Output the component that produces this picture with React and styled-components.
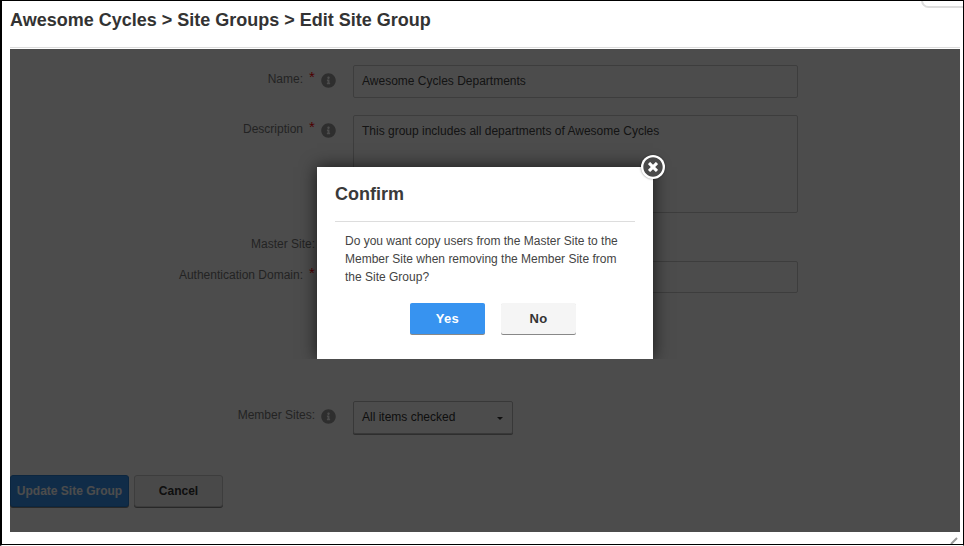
import React from "react";
import styled, { createGlobalStyle } from "styled-components";
import { FaInfoCircle, FaTimesCircle } from "react-icons/fa";

const Global = createGlobalStyle`
  html, body { margin: 0; padding: 0; background: #fff; }
  body { font-family: "Liberation Sans", Arial, sans-serif; }
`;

const Frame = styled.div`
  position: relative;
  width: 964px;
  height: 546px;
  box-sizing: border-box;
  border-top: 1px solid #000;
  border-left: 2px solid #000;
  border-right: 1px solid #000;
  border-bottom: 1px solid #fff;
  overflow: hidden;
  background: #fff;
`;

const BottomRule = styled.div`
  position: absolute;
  left: 0;
  right: 0;
  bottom: 0;
  height: 1px;
  background: #000;
`;

const CornerTab = styled.div`
  position: absolute;
  top: -8px;
  right: -14px;
  width: 52px;
  height: 11px;
  border: 2px solid #ddd;
  border-radius: 9px;
  background: #fff;

  &::after {
    content: "";
    position: absolute;
    left: 5px;
    right: 0;
    bottom: 7px;
    height: 2px;
    background: #666;
  }
`;

const Grip = styled.svg`
  position: absolute;
  right: 5px;
  bottom: 1px;
  width: 8px;
  height: 7px;
`;

const Page = styled.div`
  display: flex;
  flex-direction: column;
  margin: 0 3px 0 8px;
`;

const Title = styled.h1`
  margin: 0;
  height: 47px;
  box-sizing: border-box;
  padding-top: 9px;
  border-bottom: 1px solid #ddd;
  font-size: 18px;
  line-height: 20px;
  font-weight: 700;
  color: #333;
`;

const Content = styled.div`
  position: relative;
  margin-top: 1px;
  height: 483px;
  box-sizing: border-box;
  padding-top: 16px;
`;

const Overlay = styled.div`
  position: absolute;
  inset: 0;
  background: rgba(0, 0, 0, 0.7);
`;

const Row = styled.div`
  display: grid;
  grid-template-columns: 305px 38px 445px;
  height: ${(p) => p.$h}px;
  margin-bottom: ${(p) => p.$mb}px;
`;

const LabelCell = styled.div`
  display: flex;
  justify-content: flex-end;
  align-items: flex-start;
  padding-top: ${(p) => p.$pt ?? 7}px;
  font-size: 12px;
  line-height: 15px;
  color: #777;
`;

const Star = styled.span`
  width: 6px;
  margin-left: 6px;
  font-size: 15px;
  line-height: 10px;
  color: #f00;
`;

const IconCell = styled.div`
  display: flex;
  align-items: flex-start;
  padding: 8px 0 0 6px;
  color: #999;
  font-size: 15px;
`;

const Field = styled.div`
  box-sizing: border-box;
  border: 1px solid #ccc;
  border-radius: 2px;
  background: #fff;
  padding: 8px;
  font-size: 12px;
  line-height: 15px;
  color: #444;
`;

const SelectBox = styled.div`
  box-sizing: border-box;
  position: relative;
  width: 160px;
  height: 33px;
  border: 1px solid #bbb;
  border-radius: 2px;
  box-shadow: 0 1px 0 #999;
  padding: 8px;
  font-size: 12px;
  line-height: 15px;
  color: #333;
  background: #fff;
`;

const Caret = styled.span`
  position: absolute;
  right: 9px;
  top: 15px;
  border-left: 3px solid transparent;
  border-right: 3px solid transparent;
  border-top: 3px solid #333;
`;

const Actions = styled.div`
  display: flex;
  gap: 5px;
`;

const PageButton = styled.button`
  height: 32px;
  width: ${(p) => p.$w}px;
  box-sizing: border-box;
  padding: 0;
  font: 700 12px "Liberation Sans", Arial, sans-serif;
  border-radius: 3px;
  border: 1px solid ${(p) => (p.$primary ? "#2a7fd4" : "#ccc")};
  box-shadow: 0 1px 0 #888;
  background: ${(p) => (p.$primary ? "#3793f0" : "#f5f5f5")};
  color: ${(p) => (p.$primary ? "#fff" : "#333")};
`;

const Modal = styled.div`
  position: absolute;
  left: 315px;
  top: 166px;
  width: 336px;
  height: 192px;
  box-sizing: border-box;
  padding: 0 18px;
  background: #fff;
  box-shadow: 0 0 16px rgba(0, 0, 0, 0.7);
  clip-path: inset(-24px -24px 0 -24px);
  display: flex;
  flex-direction: column;
`;

const ModalTitle = styled.h2`
  margin: 0;
  height: 55px;
  box-sizing: border-box;
  padding-top: 16px;
  border-bottom: 1px solid #ddd;
  font-size: 18px;
  line-height: 22px;
  font-weight: 700;
  color: #3a3a3a;
`;

const ModalText = styled.p`
  margin: 0;
  padding: 10px 10px 0;
  font-size: 12px;
  line-height: 18px;
  color: #444;
`;

const ModalActions = styled.div`
  display: flex;
  justify-content: center;
  gap: 16px;
  margin: 17px 0 0 16px;
`;

const ModalButton = styled.button`
  width: 75px;
  height: 31px;
  box-sizing: border-box;
  padding: 0;
  border: 0;
  border-radius: 2px;
  font: 700 13px "Liberation Sans", Arial, sans-serif;
  letter-spacing: 0.3px;
  background: ${(p) => (p.$primary ? "#3793f0" : "#f5f5f5")};
  color: ${(p) => (p.$primary ? "#fff" : "#333")};
  box-shadow: 0 1px 0 #888;
`;

const Close = styled.div`
  position: absolute;
  right: -12px;
  top: -12px;
  width: 24px;
  height: 24px;
  box-sizing: border-box;
  border-radius: 50%;
  background: #fff;
  box-shadow: 0 0 2px rgba(0, 0, 0, 0.5);
  display: flex;
  align-items: center;
  justify-content: center;
  color: #4a4a4a;
  font-size: 20px;
`;

function Info() {
  return (
    <IconCell>
      <FaInfoCircle />
    </IconCell>
  );
}

export default function App() {
  return (
    <Frame>
      <Global />
      <Page>
        <Title>Awesome Cycles &gt; Site Groups &gt; Edit Site Group</Title>
        <Content>
          <Row $h={32} $mb={18}>
            <LabelCell>Name:<Star>*</Star></LabelCell>
            <Info />
            <Field>Awesome Cycles Departments</Field>
          </Row>
          <Row $h={98} $mb={24}>
            <LabelCell>Description<Star>*</Star></LabelCell>
            <Info />
            <Field>This group includes all departments of Awesome Cycles</Field>
          </Row>
          <Row $h={0} $mb={24}>
            <LabelCell $pt={0}>Master Site:</LabelCell>
          </Row>
          <Row $h={32} $mb={108}>
            <LabelCell>Authentication Domain:<Star>*</Star></LabelCell>
            <div />
            <Field />
          </Row>
          <Row $h={33} $mb={41}>
            <LabelCell>Member Sites:</LabelCell>
            <Info />
            <SelectBox>All items checked<Caret /></SelectBox>
          </Row>
          <Actions>
            <PageButton $primary $w={119}>Update Site Group</PageButton>
            <PageButton $w={89}>Cancel</PageButton>
          </Actions>
          <Overlay />
        </Content>
      </Page>
      <Modal>
        <Close><FaTimesCircle /></Close>
        <ModalTitle>Confirm</ModalTitle>
        <ModalText>
          Do you want copy users from the Master Site to the Member Site when removing the Member Site from the Site Group?
        </ModalText>
        <ModalActions>
          <ModalButton $primary>Yes</ModalButton>
          <ModalButton>No</ModalButton>
        </ModalActions>
      </Modal>
      <CornerTab />
      <Grip viewBox="0 0 8 7"><path d="M1 7 L7 1" stroke="#999" strokeWidth="2" /></Grip>
      <BottomRule />
    </Frame>
  );
}
